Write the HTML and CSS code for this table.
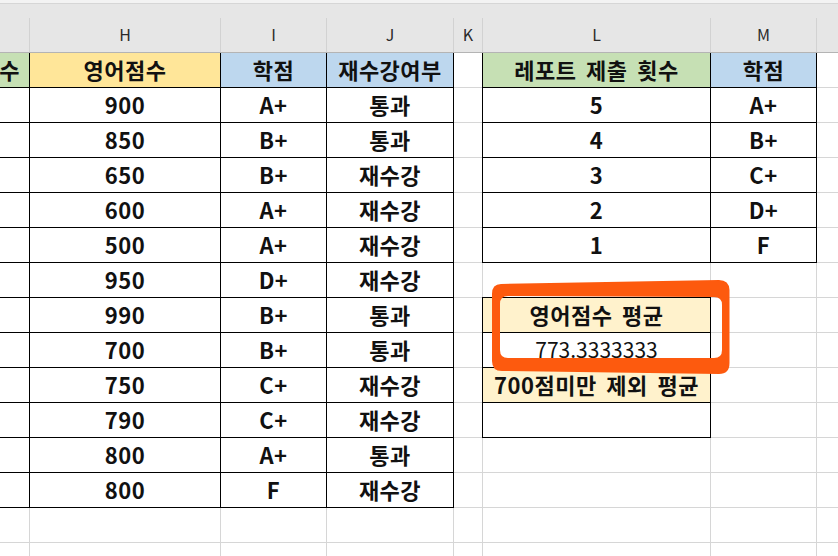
FILE: index.html
```html
<!DOCTYPE html>
<html lang="ko">
<head>
<meta charset="utf-8">
<title>Sheet</title>
<link rel="stylesheet" href="styles.css">
</head>
<body>
<div class="sheet">
  <div class="topstrip"></div>
  <div class="colhead">
    <div class="colhead-top"></div>
    <div class="colhead-row">
      <div class="ch"></div>
      <div class="ch">H</div>
      <div class="ch">I</div>
      <div class="ch">J</div>
      <div class="ch">K</div>
      <div class="ch">L</div>
      <div class="ch">M</div>
      <div class="ch"></div>
    </div>
  </div>
  <div class="grid">
    <!-- header row -->
    <div class="c b green tail">수</div>
    <div class="c b yellow">영어점수</div>
    <div class="c b blue">학점</div>
    <div class="c b blue">재수강여부</div>
    <div class="c"></div>
    <div class="c b green">레포트 제출 횟수</div>
    <div class="c b blue">학점</div>
    <div class="c"></div>

    <div class="c b"></div><div class="c b num">900</div><div class="c b">A+</div><div class="c b">통과</div>
    <div class="c"></div><div class="c b num">5</div><div class="c b">A+</div><div class="c"></div>

    <div class="c b"></div><div class="c b num">850</div><div class="c b">B+</div><div class="c b">통과</div>
    <div class="c"></div><div class="c b num">4</div><div class="c b">B+</div><div class="c"></div>

    <div class="c b"></div><div class="c b num">650</div><div class="c b">B+</div><div class="c b">재수강</div>
    <div class="c"></div><div class="c b num">3</div><div class="c b">C+</div><div class="c"></div>

    <div class="c b"></div><div class="c b num">600</div><div class="c b">A+</div><div class="c b">재수강</div>
    <div class="c"></div><div class="c b num">2</div><div class="c b">D+</div><div class="c"></div>

    <div class="c b"></div><div class="c b num">500</div><div class="c b">A+</div><div class="c b">재수강</div>
    <div class="c"></div><div class="c b num">1</div><div class="c b">F</div><div class="c"></div>

    <div class="c b"></div><div class="c b num">950</div><div class="c b">D+</div><div class="c b">재수강</div>
    <div class="c"></div><div class="c"></div><div class="c"></div><div class="c"></div>

    <div class="c b"></div><div class="c b num">990</div><div class="c b">B+</div><div class="c b">통과</div>
    <div class="c"></div><div class="c b beige">영어점수 평균</div><div class="c"></div><div class="c"></div>

    <div class="c b"></div><div class="c b num">700</div><div class="c b">B+</div><div class="c b">통과</div>
    <div class="c"></div><div class="c b plain">773.3333333</div><div class="c"></div><div class="c"></div>

    <div class="c b"></div><div class="c b num">750</div><div class="c b">C+</div><div class="c b">재수강</div>
    <div class="c"></div><div class="c b beige">700점미만 제외 평균</div><div class="c"></div><div class="c"></div>

    <div class="c b"></div><div class="c b num">790</div><div class="c b">C+</div><div class="c b">재수강</div>
    <div class="c"></div><div class="c b"></div><div class="c"></div><div class="c"></div>

    <div class="c b"></div><div class="c b num">800</div><div class="c b">A+</div><div class="c b">통과</div>
    <div class="c"></div><div class="c"></div><div class="c"></div><div class="c"></div>

    <div class="c b"></div><div class="c b num">800</div><div class="c b">F</div><div class="c b">재수강</div>
    <div class="c"></div><div class="c"></div><div class="c"></div><div class="c"></div>

    <div class="c"></div><div class="c"></div><div class="c"></div><div class="c"></div>
    <div class="c"></div><div class="c"></div><div class="c"></div><div class="c"></div>

    <div class="c"></div><div class="c"></div><div class="c"></div><div class="c"></div>
    <div class="c"></div><div class="c"></div><div class="c"></div><div class="c"></div>
  </div>
  <svg class="marker" viewBox="0 0 838 556" width="838" height="556" aria-hidden="true">
    <path fill="#fd5a0e" fill-rule="evenodd" d="M501 284 L719 280 Q729 280 729.5 290 L729.5 363 Q729.5 374 719 374 L502 371 Q492 371 492 361 L492 294 Q492 284 501 284 Z M508 296 L714 297 Q722 297 722 305 L722 350 Q722 358 714 358 L508 358 Q500 358 500 350 L500 304 Q500 296 508 296 Z"/>
  </svg>
</div>
</body>
</html>
```

FILE: styles.css
```css
html, body {
  margin: 0;
  padding: 0;
  background: #ffffff;
}

body {
  width: 838px;
  height: 556px;
  overflow: hidden;
  font-family: "Noto Sans CJK KR", "Noto Sans", sans-serif;
}

.sheet {
  position: relative;
  width: 838px;
  height: 556px;
  overflow: hidden;
}

.topstrip {
  height: 3px;
  background: #f3f3f3;
  border-bottom: 1px solid #d6d6d6;
}

.colhead {
  background: #e6e6e6;
  border-bottom: 1px solid #b4b4b4;
}

.colhead-top {
  height: 14px;
}

.colhead-row {
  display: grid;
  grid-template-columns: 29px 190px 105px 126px 28px 227px 105px 60px;
  column-gap: 1px;
  height: 34px;
  background: #d2d2d2;
}

.ch {
  background: #e6e6e6;
  display: flex;
  align-items: center;
  justify-content: center;
  padding-bottom: 2px;
  font-size: 16px;
  font-weight: 400;
  color: #2a2a2a;
  font-family: "Noto Sans CJK KR", "Noto Sans", sans-serif;
}

.grid {
  display: grid;
  grid-template-columns: 29px 190px 105px 126px 28px 227px 105px 60px;
  grid-auto-rows: 34px;
  gap: 1px;
  background: #d6d6d6;
  overflow: hidden;
}

.c {
  background: #ffffff;
  display: flex;
  align-items: center;
  justify-content: center;
  padding-bottom: 2px;
  box-sizing: border-box;
  white-space: nowrap;
  overflow: hidden;
  font-size: 22px;
  font-weight: 700;
  color: #111111;
  letter-spacing: 0.5px;
  word-spacing: 3px;
}

.b {
  box-shadow: 0 0 0 1px #000000;
}

.num {
  letter-spacing: 0.5px;
}

.tail {
  justify-content: flex-end;
  padding-right: 9px;
}

.green { background: #c6e0b4; }
.yellow { background: #ffe699; }
.blue { background: #bdd7ee; }
.beige { background: #fff2cc; }

.plain {
  font-weight: 400;
  font-size: 21px;
  letter-spacing: 0;
  word-spacing: 0;
}

.marker {
  position: absolute;
  left: 0;
  top: 0;
  pointer-events: none;
}
```
